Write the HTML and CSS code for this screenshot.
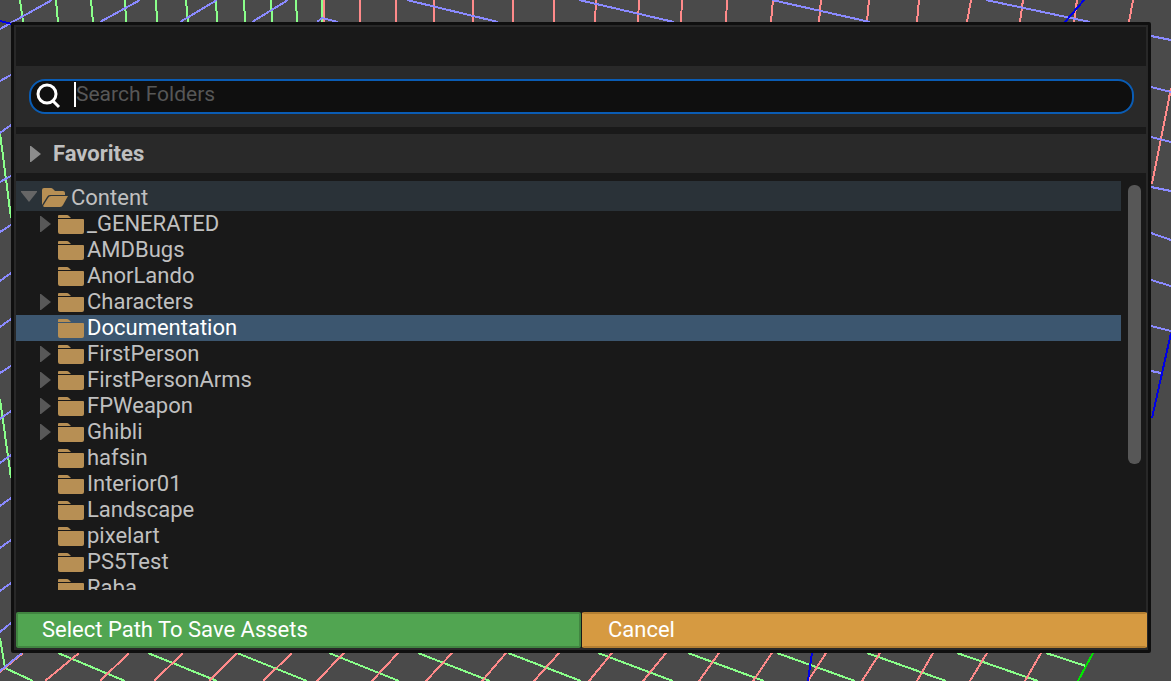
FILE: index.html
```html
<!DOCTYPE html>
<html lang="en">
<head>
<meta charset="utf-8">
<title>Select Path</title>
<link rel="stylesheet" href="styles.css">
</head>
<body>
<svg class="viewport-grid" viewBox="0 0 1171 681" preserveAspectRatio="none" aria-hidden="true" shape-rendering="crispEdges">
  <path class="line-green" d="M20 0L23 22M56 0L58 22M91 0L93 22M125 0L126 22M156 0L157 22M186 0L188 22M216 0L217 22M244 0L245 22M271 0L272 22M296 0L297 22M322 0V22M0 133L11 218M0 399L11 478M0 638L5 668L33 681M58 653L125 681M148 653L217 681M237 653L307 681M329 653L399 681M418 653L490 681M508 653L581 681M598 653L673 681M688 653L764 681M777 653L855 681M867 653L946 681M957 653L1038 681M1046 653L1086 666"/>
  <path class="line-red" d="M324 0V22M360 0V22M396 0V22M434 0V22M473 0V22M513 0V22M554 0V22M596 0L595 22M639 0L638 22M682 0L681 22M727 0L726 22M773 0L771 22M821 0L819 22M869 0L867 22M919 0L917 22M971 0L967 22M1023 0L1020 22M1077 0L1074 22M1133 0L1129 22M1171 88L1152 184M23 653L0 672M79 653L45 681M129 653L100 681M183 653L154 681M237 653L209 681M292 653L263 681M344 653L317 681M398 653L372 681M452 653L426 681M506 653L482 681M559 653L534 681M612 653L589 681M666 653L643 681M719 653L699 681M772 653L753 681M826 653L808 681M880 653L862 681M933 653L917 681M987 653L970 681M1041 653L1025 681"/>
  <path class="line-violet" d="M0 29L52 0M100 22L140 0M180 22L217 0M252 22L288 0M317 22L322 18L338 22M407 0L498 22M579 0L674 22M772 0L870 22M986 0L1090 22M0 81L11 75M0 133L11 125M0 182L11 176M0 232L11 225M0 281L11 273M0 327L11 319M0 373L11 366M0 419L11 411M0 463L11 455M0 506L11 498M0 548L11 540M0 591L11 583M0 632L11 623M0 671L22 653M1151 36L1171 40M1151 87L1171 92M1151 137L1171 142M1151 187L1171 191M1151 233L1171 240M1151 280L1171 286M1151 326L1171 331M1151 371L1161 373"/>
  <path class="line-blue" d="M0 21L12 24M1084 0L1065 22M1171 333L1152 418M812 653L808 681"/>
  <path class="line-axis" d="M1093 653L1078 681"/>
</svg>
<svg class="symbols" aria-hidden="true">
  <symbol id="folder" viewBox="0 0 26 20"><path d="M0 4V2Q0 1 1 1H9Q10 1 11 2L13 4ZM0 5H25Q26 5 26 6V18Q26 20 24 20H2Q0 20 0 18Z"/></symbol>
  <symbol id="folder-open" viewBox="0 0 26 20"><path d="M0 17V2Q0 0 2 0H9Q10 0 11 1L13 3H21Q23 3 23 5V7H8Q6 7 5 9ZM1 18L6 10Q7 8 9 8H26L21 17Q20 19 18 19H2Z"/></symbol>
  <symbol id="arrow" viewBox="0 0 11 16"><path d="M0 0H1L11 8L1 16H0Z"/></symbol>
  <symbol id="arrow-down" viewBox="0 0 16 11"><path d="M0 0H16V1L8 11L0 1Z"/></symbol>
</svg>
<main class="dialog">
  <div class="titlebar"></div>
  <label class="search-panel">
    <span class="search">
      <svg class="search-icon" viewBox="0 0 26 26" aria-hidden="true"><circle cx="11" cy="11" r="9"/><path d="M17 18L23 24"/></svg>
      <span class="caret"></span>
      <input class="search-input" type="text" placeholder="Search Folders" aria-label="Search Folders">
    </span>
  </label>
  <button class="favorites" type="button"><svg class="arrow arrow-light"><use href="#arrow"/></svg>Favorites</button>
  <section class="browser">
    <ul class="tree">
      <li class="row row-root"><svg class="arrow-down"><use href="#arrow-down"/></svg><svg class="folder"><use href="#folder-open"/></svg>Content</li>
      <li class="row parent"><svg class="arrow"><use href="#arrow"/></svg><svg class="folder"><use href="#folder"/></svg>_GENERATED</li>
      <li class="row"><svg class="folder"><use href="#folder"/></svg>AMDBugs</li>
      <li class="row"><svg class="folder"><use href="#folder"/></svg>AnorLando</li>
      <li class="row parent"><svg class="arrow"><use href="#arrow"/></svg><svg class="folder"><use href="#folder"/></svg>Characters</li>
      <li class="row selected"><svg class="folder"><use href="#folder"/></svg>Documentation</li>
      <li class="row parent"><svg class="arrow"><use href="#arrow"/></svg><svg class="folder"><use href="#folder"/></svg>FirstPerson</li>
      <li class="row parent"><svg class="arrow"><use href="#arrow"/></svg><svg class="folder"><use href="#folder"/></svg>FirstPersonArms</li>
      <li class="row parent"><svg class="arrow"><use href="#arrow"/></svg><svg class="folder"><use href="#folder"/></svg>FPWeapon</li>
      <li class="row parent"><svg class="arrow"><use href="#arrow"/></svg><svg class="folder"><use href="#folder"/></svg>Ghibli</li>
      <li class="row"><svg class="folder"><use href="#folder"/></svg>hafsin</li>
      <li class="row"><svg class="folder"><use href="#folder"/></svg>Interior01</li>
      <li class="row"><svg class="folder"><use href="#folder"/></svg>Landscape</li>
      <li class="row"><svg class="folder"><use href="#folder"/></svg>pixelart</li>
      <li class="row"><svg class="folder"><use href="#folder"/></svg>PS5Test</li>
      <li class="row"><svg class="folder"><use href="#folder"/></svg>Raba</li>
    </ul>
    <div class="scrollbar"><div class="thumb"></div></div>
  </section>
  <footer class="actions">
    <button class="action save" type="button">Select Path To Save Assets</button>
    <button class="action cancel" type="button">Cancel</button>
  </footer>
</main>
</body>
</html>
```

FILE: styles.css
```css
* { box-sizing: border-box; }

body {
  margin: 0;
  height: 100vh;
  padding: 22px 20px 28px 11px;
  display: flex;
  overflow: hidden;
  background: #4a4a4a;
  color: #c0c0c0;
  font: 22px/26px Roboto, sans-serif;
}

button, input { font: inherit; }

.viewport-grid {
  position: absolute;
  inset: 0;
  width: 100%;
  height: 100%;
  fill: none;
  stroke-width: 2;
}
.line-green { stroke: #8aff8a; }
.line-red { stroke: #ff8a8a; }
.line-violet { stroke: #8a8aff; }
.line-blue { stroke: #0000e6; }
.line-axis { stroke: #00e600; }

.symbols { display: none; }

.dialog {
  position: relative;
  flex: 1;
  min-width: 0;
  display: flex;
  flex-direction: column;
  padding: 2px 1px 2px 2px;
  border: 3px solid #0f0f0f;
  border-radius: 2px;
  background: #191919;
  box-shadow: inset 0 0 0 2px #282828;
}

.titlebar { height: 39px; }

.search-panel {
  padding: 13px;
  margin-bottom: 7px;
  background: #292929;
}
.search {
  display: flex;
  align-items: center;
  height: 35px;
  padding: 0 5px;
  border: 2px solid #0a5cb4;
  border-radius: 16px;
  background: #0f0f0f;
}
.search-icon {
  width: 26px;
  height: 26px;
  margin-bottom: 2px;
  fill: none;
  stroke: #fff;
  stroke-width: 3;
}
.caret {
  width: 2px;
  height: 25px;
  margin: 0 0 4px 12px;
  background: #fff;
}
.search-input {
  flex: 1;
  min-width: 0;
  height: 26px;
  margin-bottom: 6px;
  padding: 0;
  border: 0;
  outline: 0;
  background: transparent;
  color: #c0c0c0;
  font-size: 21px;
}
.search-input::placeholder { color: #575757; opacity: 1; }

.favorites {
  display: flex;
  align-items: center;
  gap: 12px;
  height: 39px;
  margin-bottom: 8px;
  padding: 0 14px;
  border: 0;
  background: #292929;
  color: #c0c0c0;
  font-weight: 700;
}

.arrow {
  flex: none;
  width: 11px;
  height: 16px;
  fill: #585858;
}
.arrow-light { fill: #8c8c8c; }
.arrow-down {
  width: 16px;
  height: 11px;
  margin: 0 5px 4px 0;
  fill: #666;
}

.browser {
  flex: 1;
  min-height: 0;
  display: flex;
  gap: 7px;
  padding-right: 6px;
  margin-bottom: 22px;
}
.tree {
  flex: 1;
  min-width: 0;
  margin: 0;
  padding: 0;
  overflow: hidden;
  list-style: none;
}
.row {
  display: flex;
  align-items: center;
  height: 26px;
  padding-left: 42px;
}
.row-root {
  height: 30px;
  padding: 4px 0 0 5px;
  background: #2a3238;
}
.parent { padding-left: 24px; }
.parent .arrow { margin-right: 7px; }
.selected { background: #3c566f; color: #fff; }
.folder {
  flex: none;
  width: 26px;
  height: 20px;
  margin-right: 3px;
  fill: #b78f54;
}

.scrollbar { width: 13px; padding-top: 4px; }
.thumb {
  height: 69%;
  border-radius: 6px;
  background: #575757;
}

.actions { display: flex; gap: 1px; }
.action {
  flex: 1;
  height: 36px;
  padding: 0 24px;
  border: 2px solid;
  border-radius: 2px;
  color: #fff;
  text-align: left;
}
.save { background: #51a551; border-color: #418541; }
.cancel { background: #d69a41; border-color: #b47f32 #d69a41; }
```
